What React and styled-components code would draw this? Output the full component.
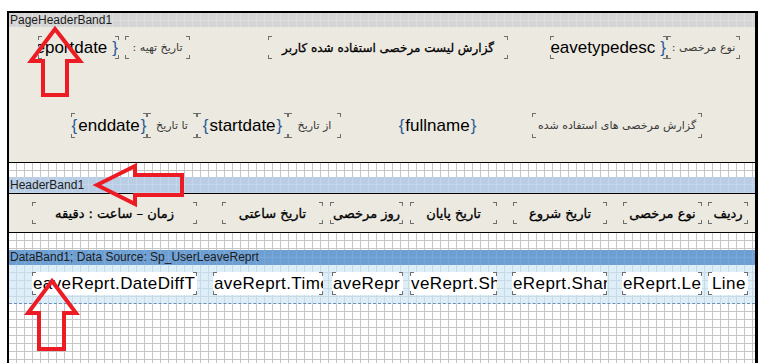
import React from "react";
import styled, { createGlobalStyle, css } from "styled-components";

const GlobalStyle = createGlobalStyle`
  html, body { margin: 0; padding: 0; background: #ffffff; }
  body { font-family: "Liberation Sans", Arial, sans-serif; }
`;

const FA = `"DejaVu Sans", "Noto Sans", sans-serif`;

const tones = {
  page: { bg: "#d5d5d5", line: "#dedede" },
  header: { bg: "#b9cde5", line: "#c5d6eb" },
  data: { bg: "#6e9fd3", line: "#7aa8d9" },
  white: { bg: "#ffffff", line: "#c6c6c6" },
  rows: { bg: "#deeef9", line: "#c9dae7" },
};

const grid = (line) => css`
  background-image:
    repeating-linear-gradient(to right, transparent 0 7px, ${line} 7px 8px),
    repeating-linear-gradient(to bottom, transparent 0 7px, ${line} 7px 8px);
`;

const corners = (c) => `
  linear-gradient(${c},${c}) left top / 4px 1px no-repeat,
  linear-gradient(${c},${c}) left top / 1px 4px no-repeat,
  linear-gradient(${c},${c}) right top / 4px 1px no-repeat,
  linear-gradient(${c},${c}) right top / 1px 4px no-repeat,
  linear-gradient(${c},${c}) left bottom / 4px 1px no-repeat,
  linear-gradient(${c},${c}) left bottom / 1px 4px no-repeat,
  linear-gradient(${c},${c}) right bottom / 4px 1px no-repeat,
  linear-gradient(${c},${c}) right bottom / 1px 4px no-repeat
`;

const Page = styled.div`
  position: relative;
  width: 769px;
  height: 363px;
  overflow: hidden;
  box-sizing: border-box;
  padding: 11px 0 0 7px;
`;

const Frame = styled.div`
  width: 751px;
  height: 352px;
  box-sizing: border-box;
  border: 2px solid #000;
  border-right-width: 3px;
  border-bottom: none;
  display: flex;
  flex-direction: column;
  background: #fff;
`;

const BandBar = styled.div`
  flex: none;
  height: ${(p) => p.$h}px;
  line-height: ${(p) => p.$h}px;
  background-color: ${(p) => tones[p.$tone].bg};
  ${(p) => grid(tones[p.$tone].line)}
  font-size: 12px;
  color: #1c1c1c;
  padding-left: 1px;
  white-space: nowrap;
`;

const GridGap = styled.div`
  flex: ${(p) => (p.$fill ? "1" : "none")};
  height: ${(p) => (p.$h ? `${p.$h}px` : "auto")};
  background-color: ${(p) => tones[p.$tone].bg};
  ${(p) => grid(tones[p.$tone].line)}
  border-bottom: ${(p) => p.$dash || "none"};
`;

const BeigeBody = styled.div`
  flex: none;
  height: ${(p) => p.$h}px;
  background: #ece9e0;
  border-top: ${(p) => (p.$ruleTop ? "1px solid #000" : "none")};
  border-bottom: 1px solid #000;
  display: flex;
  flex-direction: column;
  gap: ${(p) => p.$gap || 0}px;
  padding-top: ${(p) => p.$pt}px;
  box-sizing: border-box;
`;

const DataBody = styled(GridGap)`
  display: flex;
  flex-direction: column;
  padding-top: 7px;
  box-sizing: border-box;
`;

const Row = styled.div`
  display: flex;
  align-items: stretch;
  height: ${(p) => p.$h}px;
`;

const Field = styled.div`
  flex: none;
  width: ${(p) => p.$w}px;
  margin-left: ${(p) => p.$ml || 0}px;
  display: flex;
  align-items: center;
  justify-content: ${(p) => p.$justify || "center"};
  overflow: hidden;
  white-space: nowrap;
  box-sizing: border-box;
  padding: ${(p) => p.$pad || "0"};
  background: ${(p) =>
    p.$plain ? p.$fill || "transparent" : `${corners("#6e6e6e")}, ${p.$fill || "transparent"}`};
`;

const Expr = styled.span`
  flex: none;
  font-family: "Liberation Sans", Arial, sans-serif;
  font-size: 17px;
  color: #000;
`;

const Brace = styled.span`
  color: #2b5c99;
  margin-left: ${(p) => (p.$gap ? p.$gap : 1)}px;
  margin-right: 1px;
`;

const Label = styled.span`
  flex: none;
  font-family: ${FA};
  font-size: 11px;
  color: #3a3a3a;
`;

const Title = styled.span`
  flex: none;
  font-family: ${FA};
  font-size: 12px;
  -webkit-text-stroke: 0.3px #000;
  color: #000;
`;

const ColHead = styled.span`
  flex: none;
  font-family: ${FA};
  font-size: 13px;
  -webkit-text-stroke: 0.3px #000;
  color: #000;
`;

const DataText = styled.span`
  flex: none;
  font-family: "Liberation Sans", Arial, sans-serif;
  font-size: 17px;
  letter-spacing: 0.4px;
  color: #000;
`;

const Overlay = styled.svg`
  position: absolute;
  left: 0;
  top: 0;
  pointer-events: none;
`;

const ArrowShape = styled.polygon`
  fill: none;
  stroke: #ed1c24;
  stroke-width: 4;
  stroke-linejoin: miter;
`;

const headers = [
  { t: "زمان – ساعت : دقیقه", w: 165, ml: 23 },
  { t: "تاریخ ساعتی", w: 101, ml: 25 },
  { t: "روز مرخصی", w: 73, ml: 7 },
  { t: "تاریخ پایان", w: 87, ml: 7 },
  { t: "تاریخ شروع", w: 94, ml: 16 },
  { t: "نوع مرخصی", w: 79, ml: 16 },
  { t: "ردیف", w: 40, ml: 6 },
];

const cells = [
  { t: "eaveReprt.DateDiffT", w: 165, ml: 23 },
  { t: "aveReprt.Time", w: 110, ml: 16 },
  { t: "aveRepr", w: 71, ml: 9 },
  { t: "veReprt.Sh", w: 87, ml: 7 },
  { t: "eReprt.Shar", w: 95, ml: 15 },
  { t: "eReprt.Le", w: 80, ml: 15 },
  { t: "Line", w: 40, ml: 6, pad: "0 0 0 4px" },
];

export default function App() {
  return (
    <>
      <GlobalStyle />
      <Page>
        <Frame>
          <BandBar $tone="page" $h={14}>PageHeaderBand1</BandBar>
          <BeigeBody $h={136} $pt={9} $gap={54}>
            <Row $h={23}>
              <Field $w={81} $ml={29} $justify="flex-end">
                <Expr>
                  <Brace>{"{"}</Brace>reportdate<Brace $gap={5}>{"}"}</Brace>
                </Expr>
              </Field>
              <Field $w={65} $ml={6}>
                <Label dir="rtl">تاریخ تهیه :</Label>
              </Field>
              <Field $w={240} $ml={78}>
                <Title dir="rtl">گزارش لیست مرخصی استفاده شده کاربر</Title>
              </Field>
              <Field $w={117} $ml={42} $justify="flex-end">
                <Expr>
                  <Brace>{"{"}</Brace>leavetypedesc<Brace $gap={5}>{"}"}</Brace>
                </Expr>
              </Field>
              <Field $w={73}>
                <Label dir="rtl">نوع مرخصی :</Label>
              </Field>
            </Row>
            <Row $h={25}>
              <Field $w={76} $ml={62}>
                <Expr>
                  <Brace>{"{"}</Brace>enddate<Brace>{"}"}</Brace>
                </Expr>
              </Field>
              <Field $w={50}>
                <Label dir="rtl">تا تاریخ</Label>
              </Field>
              <Field $w={91}>
                <Expr>
                  <Brace>{"{"}</Brace>startdate<Brace>{"}"}</Brace>
                </Expr>
              </Field>
              <Field $w={53}>
                <Label dir="rtl">از تاریخ</Label>
              </Field>
              <Field $w={185} $ml={4} $plain>
                <Expr>
                  <Brace>{"{"}</Brace>fullname<Brace>{"}"}</Brace>
                </Expr>
              </Field>
              <Field $w={170} $ml={2}>
                <Label dir="rtl">گزارش مرخصی های استفاده شده</Label>
              </Field>
            </Row>
          </BeigeBody>
          <GridGap $tone="white" $h={14} />
          <BandBar $tone="header" $h={16}>HeaderBand1</BandBar>
          <BeigeBody $h={40} $pt={8} $ruleTop>
            <Row $h={22}>
              {headers.map((h) => (
                <Field key={h.t} $w={h.w} $ml={h.ml}>
                  <ColHead dir="rtl">{h.t}</ColHead>
                </Field>
              ))}
            </Row>
          </BeigeBody>
          <GridGap $tone="white" $h={17} />
          <BandBar $tone="data" $h={15}>DataBand1; Data Source: Sp_UserLeaveReprt</BandBar>
          <DataBody $tone="rows" $h={39} $dash="1px dashed #6f90b5">
            <Row $h={23}>
              {cells.map((c) => (
                <Field
                  key={c.t}
                  $w={c.w}
                  $ml={c.ml}
                  $justify="flex-start"
                  $pad={c.pad || "0 0 0 1px"}
                  $fill="#ffffff"
                >
                  <DataText>{c.t}</DataText>
                </Field>
              ))}
            </Row>
          </DataBody>
          <GridGap $tone="white" $fill />
        </Frame>
        <Overlay width="769" height="363" viewBox="0 0 769 363">
          <ArrowShape points="55,29 80,61 67,61 67,95 43,95 43,61 31,61" />
          <ArrowShape points="97,185 135,166 135,175 182,175 182,195 135,195 135,204" />
          <ArrowShape points="52,281 76,313 64,313 64,349 39,349 39,313 28,313" />
        </Overlay>
      </Page>
    </>
  );
}
